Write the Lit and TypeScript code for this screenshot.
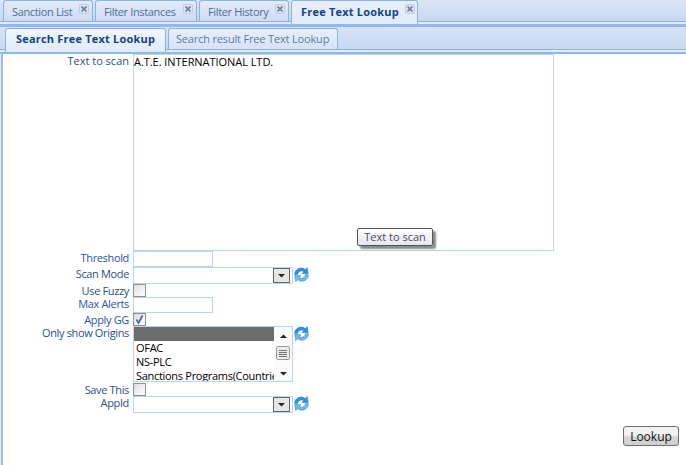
import { LitElement, html, css, svg } from 'lit';
import { customElement } from 'lit/decorators.js';

const refreshIcon = html`
  <svg class="refresh" width="15" height="15" viewBox="0 0 15 15">
    <path d="M0.6 7.6 C0.6 3.2 4.2 1 7.3 1 C9 1 10.3 1.7 11.2 2.6 L13.2 0.6 L14.2 6.8 L8 6.6 L9.8 4.8 C9.2 4.2 8.4 3.9 7.4 3.9 C5.6 3.9 4 5 3.6 7.6 Z" fill="#2f8fe4" stroke="#1f74c8" stroke-width=".5"/>
    <path d="M14.4 7.8 C14.4 12 10.9 14.2 7.7 14.2 C6 14.2 4.7 13.5 3.8 12.6 L1.8 14.6 L0.8 8.6 L7 8.8 L5.2 10.5 C5.8 11 6.6 11.3 7.6 11.3 C9.4 11.3 11 10.4 11.4 7.8 Z" fill="#6fbcf5" stroke="#1f74c8" stroke-width=".5"/>
  </svg>`;

const closeIcon = html`
  <span class="close">
    <svg width="6" height="6" viewBox="0 0 6 6">
      <path d="M0.5 0.5 L5.5 5.5 M5.5 0.5 L0.5 5.5" stroke="#6f83a6" stroke-width="1.8" fill="none"/>
    </svg>
  </span>`;

const arrow = (up: boolean) => svg`<path d="${up ? 'M0 4 L3.5 0.5 L7 4 Z' : 'M0 0 L7 0 L3.5 3.5 Z'}" fill="#222"/>`;

@customElement('app-root')
export class AppRoot extends LitElement {
  static styles = css`
    :host {
      display: block;
      width: 686px;
      height: 465px;
      overflow: hidden;
      background: #fff;
      font-family: "Open Sans", "Liberation Sans", sans-serif;
      font-size: 11px;
      color: #15428b;
    }
    .outer-strip {
      box-sizing: border-box;
      display: flex;
      align-items: flex-start;
      gap: 2px;
      height: 22px;
      padding-left: 3px;
      background: linear-gradient(#dbe7f7, #c6d8ef);
      border-bottom: 1px solid #8fb0dd;
    }
    .tab {
      box-sizing: border-box;
      height: 21px;
      display: flex;
      align-items: flex-start;
      justify-content: space-between;
      padding: 4px 3px 0 8px;
      border: 1px solid #8db2e3;
      border-bottom: none;
      border-radius: 3px 3px 0 0;
      background: linear-gradient(#e2ecf9, #cddcf2);
      color: #4f6d99;
      line-height: 13px;
      letter-spacing: -.35px;
      white-space: nowrap;
    }
    .tab.active {
      height: 24px;
      position: relative;
      z-index: 1;
      padding: 4px 2px 0 9px;
      background: linear-gradient(#e6effc, #e0ecfb);
      color: #15428b;
      font-weight: 700;
      letter-spacing: .2px;
    }
    .close {
      box-sizing: border-box;
      width: 10px;
      height: 10px;
      margin-top: -1px;
      border: 1px solid #bccde7;
      border-radius: 2px;
      background: #dbe6f5;
      display: flex;
      align-items: center;
      justify-content: center;
    }
    .band {
      height: 5px;
      background: linear-gradient(#e0ecfb 0 2px, #93b7e8 2px);
    }
    .band.low { height: 4px; }
    .inner-strip {
      box-sizing: border-box;
      height: 23px;
      padding: 1px 0 0 5px;
      display: flex;
      gap: 2px;
      align-items: flex-start;
      background: linear-gradient(#d6e3f6, #c8d9f0);
      border-bottom: 1px solid #8fb0dd;
    }
    .inner-tab {
      box-sizing: border-box;
      width: 170px;
      height: 21px;
      padding: 3px 0 0 7px;
      border: 1px solid #8db2e3;
      border-bottom: none;
      border-radius: 3px 3px 0 0;
      background: linear-gradient(#e6effb, #d6e3f6);
      color: #5d7ba6;
      line-height: 14px;
      letter-spacing: -.17px;
      white-space: nowrap;
    }
    .inner-tab.active {
      width: 161px;
      height: 24px;
      padding-left: 10px;
      position: relative;
      z-index: 1;
      background: linear-gradient(#f1f6fe, #e0ecfb);
      color: #15428b;
      font-weight: 700;
      letter-spacing: .2px;
    }
    .body {
      height: 411px;
      padding-left: 3px;
      background: linear-gradient(90deg, #dfeafa 0 1px, #9ebdea 1px 3px, #fff 3px);
    }
    .form {
      position: relative;
      display: grid;
      grid-template-columns: 126px auto;
      column-gap: 4px;
      justify-content: start;
      line-height: 13px;
    }
    .lbl {
      text-align: right;
      white-space: nowrap;
      letter-spacing: -.35px;
      color: #2c4f82;
    }
    .lbl.first { letter-spacing: 0; }
    .lbl.bright { color: #2a55a8; }
    .textarea {
      box-sizing: border-box;
      width: 421px;
      height: 197px;
      border: 1px solid #bcd3f1;
      color: #000;
      letter-spacing: -.05px;
    }
    .input {
      box-sizing: border-box;
      width: 80px;
      height: 16px;
      border: 1px solid #bcd3f1;
    }
    .line { display: flex; align-items: flex-start; gap: 1px; }
    .combo {
      box-sizing: border-box;
      width: 160px;
      height: 17px;
      border: 1px solid #bcd3f1;
      display: flex;
      justify-content: flex-end;
      align-items: center;
    }
    .combo-btn {
      box-sizing: border-box;
      width: 17px;
      height: 15px;
      margin-right: 2px;
      border: 1px solid #666;
      background: #e6e6e6;
      display: flex;
      align-items: center;
      justify-content: center;
    }
    .check {
      box-sizing: border-box;
      width: 13px;
      height: 13px;
      border: 1px solid #8e8f8f;
      background: linear-gradient(135deg, #dedede, #fff);
      display: block;
    }
    .list {
      box-sizing: border-box;
      width: 160px;
      height: 56px;
      margin-bottom: 1px;
      border: 1px solid #bcd3f1;
      display: flex;
      color: #000;
      overflow: hidden;
    }
    .options { flex: 1; min-width: 0; overflow: hidden; white-space: nowrap; letter-spacing: -.3px; }
    .options div { height: 14px; line-height: 14px; padding-left: 2px; }
    .options .sel { background: #6d6d6d; }
    .scrollbar {
      box-sizing: border-box;
      width: 18px;
      background: #fbfbfb;
      padding-top: 7px;
      display: flex;
      flex-direction: column;
      align-items: center;
    }
    .thumb {
      box-sizing: border-box;
      flex: none;
      width: 14px;
      height: 14px;
      margin: 8px 0 12px;
      border: 1px solid #9a9a9a;
      border-radius: 2px;
      background-color: #ececec;
      background-image: repeating-linear-gradient(#777 0 1px, #e8e8e8 1px 2px);
      background-size: 8px 7px;
      background-position: center;
      background-repeat: no-repeat;
    }
    .refresh { display: block; flex: none; }
    .tooltip {
      position: absolute;
      left: 354px;
      top: 174px;
      box-sizing: border-box;
      width: 76px;
      height: 18px;
      border: 1px solid #555;
      border-radius: 2px;
      background: linear-gradient(#fff, #e4e5f0);
      color: #4c4c4c;
      text-align: center;
      line-height: 16px;
      box-shadow: 3px 3px 2px #8a8a8a;
    }
    .actions {
      display: flex;
      justify-content: flex-end;
      padding: 13px 7px 0 0;
    }
    .btn {
      box-sizing: border-box;
      width: 56px;
      height: 20px;
      border: 1px solid #707070;
      border-radius: 3px;
      background: linear-gradient(#f2f2f2 0 45%, #d6d6d6 55%, #cfcfcf);
      color: #111;
      font: inherit;
      font-size: 12px;
      padding: 0;
    }
  `;

  render() {
    const tabs = [['Sanction List', 90], ['Filter Instances', 102], ['Filter History', 90]];
    return html`
      <div class="outer-strip">
        ${tabs.map(([t, w]) => html`
          <div class="tab" style="width:${w}px"><span>${t}</span>${closeIcon}</div>`)}
        <div class="tab active" style="width:127px"><span>Free Text Lookup</span>${closeIcon}</div>
      </div>
      <div class="band"></div>
      <div class="inner-strip">
        <div class="inner-tab active">Search Free Text Lookup</div>
        <div class="inner-tab">Search result Free Text Lookup</div>
      </div>
      <div class="band low"></div>
      <div class="body">
        <div class="form">
          <div class="lbl first">Text to scan</div>
          <div class="textarea">A.T.E. INTERNATIONAL LTD.</div>

          <div class="lbl bright">Threshold</div>
          <div class="input"></div>

          <div class="lbl">Scan Mode</div>
          <div class="line">
            <div class="combo"><div class="combo-btn"><svg width="7" height="4">${arrow(false)}</svg></div></div>
            ${refreshIcon}
          </div>

          <div class="lbl">Use Fuzzy</div>
          <span class="check"></span>

          <div class="lbl bright">Max Alerts</div>
          <div class="input"></div>

          <div class="lbl bright">Apply GG</div>
          <span class="check">
            <svg width="11" height="11" viewBox="0 0 11 11" style="display:block">
              <path d="M2.5 5.5 L4.5 9 L8.5 1.5" stroke="#4a5a9c" stroke-width="1.6" fill="none"/>
            </svg>
          </span>

          <div class="lbl">Only show Origins</div>
          <div class="line">
            <div class="list">
              <div class="options">
                <div class="sel"></div>
                <div>OFAC</div>
                <div>NS-PLC</div>
                <div>Sanctions Programs(Countries)</div>
              </div>
              <div class="scrollbar">
                <svg width="7" height="4" style="flex:none">${arrow(true)}</svg>
                <div class="thumb"></div>
                <svg width="7" height="4" style="flex:none">${arrow(false)}</svg>
              </div>
            </div>
            ${refreshIcon}
          </div>

          <div class="lbl">Save This</div>
          <span class="check"></span>

          <div class="lbl">AppId</div>
          <div class="line">
            <div class="combo"><div class="combo-btn"><svg width="7" height="4">${arrow(false)}</svg></div></div>
            ${refreshIcon}
          </div>

          <div class="tooltip">Text to scan</div>
        </div>
        <div class="actions"><button class="btn">Lookup</button></div>
      </div>
    `;
  }
}
